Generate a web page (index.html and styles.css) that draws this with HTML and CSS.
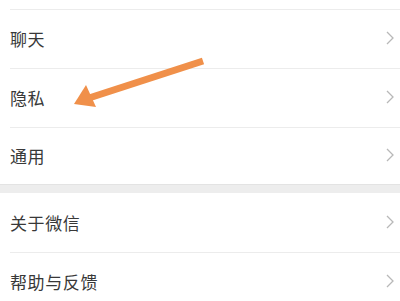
FILE: index.html
```html
<!DOCTYPE html>
<html lang="zh-CN">
<head>
<meta charset="utf-8">
<link rel="stylesheet" href="styles.css">
</head>
<body>
<div class="page">
  <div class="prev"></div>
  <div class="group">
    <div class="row"><span class="label">聊天</span><svg class="chev" width="8" height="14" viewBox="0 0 8 14"><path d="M1 1 L7 7 L1 13" fill="none" stroke="#b8b8b8" stroke-width="1.3"/></svg></div>
    <div class="row"><span class="label">隐私</span><svg class="chev" width="8" height="14" viewBox="0 0 8 14"><path d="M1 1 L7 7 L1 13" fill="none" stroke="#b8b8b8" stroke-width="1.3"/></svg></div>
    <div class="row last"><span class="label">通用</span><svg class="chev" width="8" height="14" viewBox="0 0 8 14"><path d="M1 1 L7 7 L1 13" fill="none" stroke="#b8b8b8" stroke-width="1.3"/></svg></div>
  </div>
  <div class="band"></div>
  <div class="group">
    <div class="row first"><span class="label">关于微信</span><svg class="chev" width="8" height="14" viewBox="0 0 8 14"><path d="M1 1 L7 7 L1 13" fill="none" stroke="#b8b8b8" stroke-width="1.3"/></svg></div>
    <div class="row"><span class="label">帮助与反馈</span><svg class="chev" width="8" height="14" viewBox="0 0 8 14"><path d="M1 1 L7 7 L1 13" fill="none" stroke="#b8b8b8" stroke-width="1.3"/></svg></div>
  </div>
  <svg class="arrow" width="400" height="301" viewBox="0 0 400 301">
    <line x1="203" y1="61" x2="89" y2="98" stroke="#f0904a" stroke-width="7" stroke-linecap="butt"/>
    <polygon points="74,104 86,85 96,107" fill="#f0904a"/>
  </svg>
</div>
</body>
</html>
```
FILE: styles.css
```css
html, body {
  margin: 0;
  padding: 0;
  background: #ffffff;
}
.page {
  position: relative;
  width: 400px;
  height: 301px;
  overflow: hidden;
  font-family: "Noto Sans CJK SC", "Noto Sans", sans-serif;
  color: #383838;
}
.prev {
  height: 9px;
}
.group {
  display: flex;
  flex-direction: column;
}
.row {
  height: 58px;
  margin-left: 10px;
  padding-right: 6px;
  border-top: 1px solid #ececec;
  display: flex;
  align-items: center;
  justify-content: space-between;
}
.row.first {
  border-top: none;
  height: 59px;
}
.row.last {
  height: 56px;
}
.label {
  font-size: 17px;
  line-height: 20px;
  letter-spacing: 0.6px;
}
.chev {
  display: block;
  margin-top: -2px;
}
.band {
  height: 8px;
  background: #ededed;
  border-top: 1px solid #e3e3e3;
}
.arrow {
  position: absolute;
  left: 0;
  top: 0;
  pointer-events: none;
}
```
